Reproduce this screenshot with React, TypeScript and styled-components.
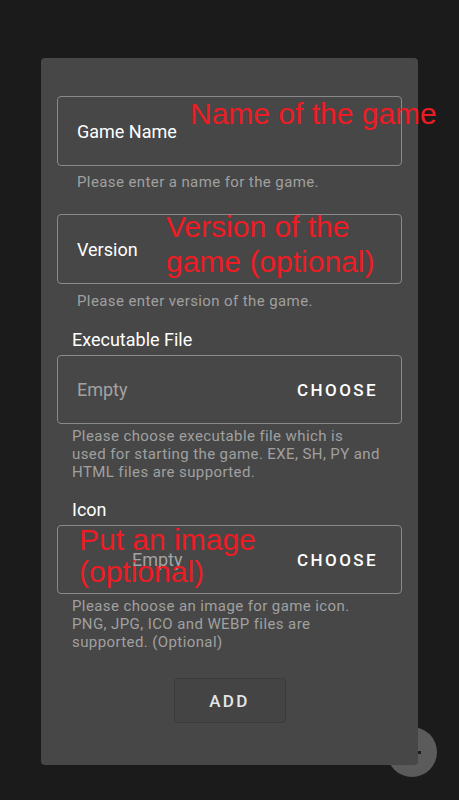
import React from 'react';
import styled, { createGlobalStyle } from 'styled-components';

const GlobalStyle = createGlobalStyle`
  html, body {
    margin: 0;
    padding: 0;
    background: #1b1b1b;
    font-family: Roboto, 'Noto Sans', Arial, sans-serif;
  }
`;

const Page = styled.div`
  position: relative;
  min-height: 800px;
  padding: 58px 0 0 41px;
  box-sizing: border-box;
  overflow: hidden;
`;

const Fab = styled.div`
  position: absolute;
  left: 387px;
  top: 727px;
  width: 50px;
  height: 50px;
  border-radius: 50%;
  background: #5b5b5b;
  z-index: 0;
`;

const FabDot = styled.span`
  position: absolute;
  left: 31px;
  top: 24px;
  width: 3px;
  height: 3px;
  background: #1e1e1e;
`;

const Dialog = styled.div`
  position: relative;
  z-index: 1;
  width: 377px;
  box-sizing: border-box;
  background: #474747;
  border-radius: 4px;
  padding: 38px 16px 42px;
  display: flex;
  flex-direction: column;
`;

const FieldBox = styled.div<{ $h?: number; $mt?: number }>`
  position: relative;
  height: ${(p) => p.$h ?? 70}px;
  margin-top: ${(p) => p.$mt ?? 0}px;
  box-sizing: border-box;
  border: 1px solid #8a8a8a;
  border-radius: 4px;
  display: flex;
  align-items: center;
  justify-content: space-between;
  padding: 0 23px 0 19px;
`;

const FieldLabel = styled.span`
  font-size: 18px;
  color: #ffffff;
`;

const Placeholder = styled.span<{ $offset?: number }>`
  font-size: 18px;
  color: #a2a2a2;
  margin-left: ${(p) => p.$offset ?? 0}px;
`;

const ChooseButton = styled.span`
  font-size: 17px;
  font-weight: 500;
  letter-spacing: 2.4px;
  color: #ffffff;
`;

const Helper = styled.div<{ $indent: number; $mt: number }>`
  margin: ${(p) => p.$mt}px 0 0 ${(p) => p.$indent}px;
  font-size: 15px;
  line-height: 18px;
  letter-spacing: 0.4px;
  color: #a0a0a0;
`;

const SectionLabel = styled.div<{ $mt: number }>`
  margin: ${(p) => p.$mt}px 0 5px 15px;
  font-size: 18px;
  line-height: 20px;
  color: #ffffff;
`;

const AddButton = styled.button`
  align-self: center;
  margin-top: 27px;
  width: 112px;
  height: 45px;
  background: #444444;
  border: 1px solid #3a3a3a;
  border-radius: 4px;
  font-family: Roboto, 'Noto Sans', Arial, sans-serif;
  font-size: 17px;
  font-weight: 500;
  letter-spacing: 2.4px;
  color: #e6e6e6;
  padding: 0;
`;

const Annotation = styled.div<{ $top: number; $left: number; $lh: number }>`
  position: absolute;
  top: ${(p) => p.$top}px;
  left: ${(p) => p.$left}px;
  font-family: 'Liberation Sans', Arial, sans-serif;
  font-size: 30px;
  line-height: ${(p) => p.$lh}px;
  color: #ed1c24;
  white-space: nowrap;
  pointer-events: none;
`;

export default function App() {
  return (
    <Page>
      <GlobalStyle />
      <Fab>
        <FabDot />
      </Fab>
      <Dialog>
        <FieldBox>
          <FieldLabel>Game Name</FieldLabel>
          <Annotation $top={-1} $left={132} $lh={36}>
            Name of the game
          </Annotation>
        </FieldBox>
        <Helper $indent={20} $mt={7}>
          Please enter a name for the game.
        </Helper>

        <FieldBox $mt={23}>
          <FieldLabel>Version</FieldLabel>
          <Annotation $top={-6} $left={108} $lh={35}>
            Version of the
            <br />
            game (optional)
          </Annotation>
        </FieldBox>
        <Helper $indent={20} $mt={8}>
          Please enter version of the game.
        </Helper>

        <SectionLabel $mt={20}>Executable File</SectionLabel>
        <FieldBox $h={69}>
          <Placeholder>Empty</Placeholder>
          <ChooseButton>CHOOSE</ChooseButton>
        </FieldBox>
        <Helper $indent={15} $mt={3}>
          Please choose executable file which is
          <br />
          used for starting the game. EXE, SH, PY and
          <br />
          HTML files are supported.
        </Helper>

        <SectionLabel $mt={19}>Icon</SectionLabel>
        <FieldBox $h={69}>
          <Placeholder $offset={55}>Empty</Placeholder>
          <ChooseButton>CHOOSE</ChooseButton>
          <Annotation $top={-2} $left={21} $lh={32}>
            Put an image
            <br />
            (optional)
          </Annotation>
        </FieldBox>
        <Helper $indent={15} $mt={3}>
          Please choose an image for game icon.
          <br />
          PNG, JPG, ICO and WEBP files are
          <br />
          supported. (Optional)
        </Helper>

        <AddButton type="button">ADD</AddButton>
      </Dialog>
    </Page>
  );
}
